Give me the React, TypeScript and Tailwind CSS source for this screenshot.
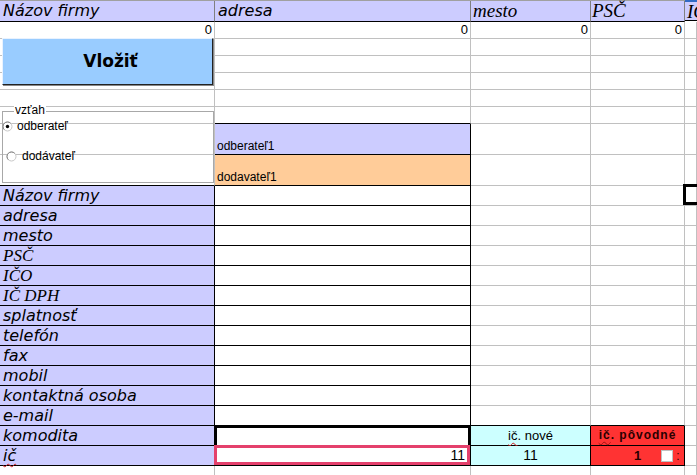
import clsx from 'clsx';
import type { ReactNode } from 'react';

const SANS = "font-['Liberation_Sans',Arial,sans-serif]";
const LABEL = "font-['DejaVu_Sans',Verdana,sans-serif] italic text-[16px]";
const SERIF = "font-['Liberation_Serif','Times_New_Roman',serif] italic text-[19px]";
const SERIF_SM = "font-['Liberation_Serif','Times_New_Roman',serif] italic text-[17px]";

const W = {
  a: 'w-[215px] shrink-0',
  b: 'w-[256px] shrink-0',
  c: 'w-[120px] shrink-0',
  d: 'w-[94px] shrink-0',
  e: 'flex-1 min-w-0',
};

type Col = keyof typeof W;
type Line = 'g' | 'k';

function Cell({
  col,
  r = 'g',
  b = 'g',
  className,
  children,
}: {
  col: Col;
  r?: Line;
  b?: Line;
  className?: string;
  children?: ReactNode;
}) {
  return (
    <div
      className={clsx(
        'relative h-full border-r border-b overflow-visible',
        W[col],
        r === 'g' ? 'border-r-[#c0c0c0]' : 'border-r-black',
        b === 'g' ? 'border-b-[#c0c0c0]' : 'border-b-black',
        className
      )}
    >
      {children}
    </div>
  );
}

function Radio({ on }: { on?: boolean }) {
  return (
    <svg width="11" height="11" viewBox="0 0 11 11" className="shrink-0">
      <circle cx="5.5" cy="5.5" r="4.5" fill="white" stroke="#c8c8c8" />
      <path d="M2.3 8.7 A4.5 4.5 0 0 1 8.7 2.3" fill="none" stroke="#808080" />
      {on && <circle cx="5.5" cy="5.5" r="1.7" fill="black" />}
    </svg>
  );
}

const labels = [
  'Názov firmy',
  'adresa',
  'mesto',
  'PSČ',
  'IČO',
  'IČ DPH',
  'splatnosť',
  'telefón',
  'fax',
  'mobil',
  'kontaktná osoba',
  'e-mail',
  'komodita',
  'ič',
];
const serifLabels = ['PSČ', 'IČO', 'IČ DPH'];

function Zero() {
  return <div className={clsx(SANS, 'text-[13px] text-right pr-[2px] leading-[16px]')}>0</div>;
}

function EmptyRow({ bBlack }: { bBlack?: boolean }) {
  return (
    <div className="flex h-[17px]">
      <Cell col="a" />
      <Cell col="b" b={bBlack ? 'k' : 'g'} />
      <Cell col="c" />
      <Cell col="d" />
      <Cell col="e" />
    </div>
  );
}

export default function App() {
  return (
    <div className="relative w-[697px] h-[475px] overflow-hidden bg-white text-black">
      {/* header */}
      <div className="flex h-[22px] border-t border-t-[#a0a0a0]">
        <div className={clsx(W.a, 'h-full bg-[#ccccff] border-r border-r-[#808080] border-b border-b-black pl-[3px]', LABEL, 'leading-[20px]')}>
          Názov firmy
        </div>
        <div className={clsx(W.b, 'h-full bg-[#ccccff] border-r border-r-[#808080] border-b border-b-black pl-[3px]', LABEL, 'leading-[20px]')}>
          adresa
        </div>
        <div className={clsx(W.c, 'h-full bg-[#ccccff] border-r border-r-[#808080] border-b border-b-black pl-[2px]', SERIF, 'leading-[20px]')}>
          mesto
        </div>
        <div className={clsx(W.d, 'h-full bg-[#ccccff] border-r border-r-[#808080] border-b border-b-black pl-[1px]', SERIF, 'leading-[20px]')}>
          PSČ
        </div>
        <div className={clsx(W.e, 'h-full bg-[#ccccff] border-b border-b-black border-t-2 border-t-[#316ac5] -mt-px pl-[2px] overflow-hidden whitespace-nowrap', SERIF, 'leading-[19px]')}>
          IČ
        </div>
      </div>

      {/* row with zeros */}
      <div className="flex h-[17px]">
        <Cell col="a"><Zero /></Cell>
        <Cell col="b"><Zero /></Cell>
        <Cell col="c"><Zero /></Cell>
        <Cell col="d"><Zero /></Cell>
        <Cell col="e" />
      </div>

      <EmptyRow />
      <EmptyRow />
      <EmptyRow />
      <EmptyRow />
      <EmptyRow bBlack />

      {/* odberateľ / dodávateľ */}
      <div className="flex h-[31px]">
        <Cell col="a" />
        <Cell col="b" r="k" b="k" className={clsx('bg-[#ccccff] flex items-end pl-[2px]', SANS, 'text-[12px] leading-[15px]')}>
          odberateľ1
        </Cell>
        <Cell col="c" />
        <Cell col="d" />
        <Cell col="e" />
      </div>
      <div className="flex h-[31px]">
        <Cell col="a" b="k" />
        <Cell col="b" r="k" b="k" className={clsx('bg-[#ffcc99] flex items-end pl-[2px]', SANS, 'text-[12px] leading-[15px]')}>
          dodavateľ1
        </Cell>
        <Cell col="c" />
        <Cell col="d" />
        <Cell col="e" />
      </div>

      {/* form labels */}
      {labels.map((l, i) => {
        const komodita = l === 'komodita';
        const ic = l === 'ič';
        const beforeKom = l === 'e-mail';
        return (
          <div key={l} className="flex h-[20px]">
            <Cell
              col="a"
              r="k"
              b="k"
              className={clsx(
                'bg-[#ccccff] flex items-end pl-[3px] whitespace-nowrap',
                serifLabels.includes(l) ? clsx(SERIF_SM, 'leading-[19px]') : clsx(LABEL, 'leading-[19px]')
              )}
            >
              {ic ? <span className="underline decoration-wavy decoration-[#d02020] decoration-1 underline-offset-2">ič</span> : l}
            </Cell>
            <Cell col="b" r="k" b="k" className={clsx(SANS, 'text-[14px] text-right leading-[19px]')}>
              {komodita && (
                <div className="absolute -left-px -top-px right-[-1px] bottom-0 border-[3px] border-b-0 border-black" />
              )}
              {ic && (
                <>
                  <div className="absolute -left-px -top-px right-0 bottom-0 border-[3px] border-[#e4406c]" />
                  <span className="relative pr-[5px]">11</span>
                </>
              )}
            </Cell>
            <Cell
              col="c"
              b={beforeKom || komodita || ic ? 'k' : 'g'}
              r={komodita || ic ? 'k' : 'g'}
              className={clsx(
                (komodita || ic) && 'bg-[#ccffff] text-center',
                SANS,
                komodita ? 'text-[13px] leading-[19px]' : 'text-[14px] leading-[19px]'
              )}
            >
              {komodita && (
                <>
                  <span className="underline decoration-wavy decoration-[#d02020] decoration-1 underline-offset-2">ič</span>. nové
                </>
              )}
              {ic && '11'}
            </Cell>
            <Cell
              col="d"
              b={beforeKom || komodita || ic ? 'k' : 'g'}
              r={komodita || ic ? 'k' : 'g'}
              className={clsx((komodita || ic) && 'bg-[#ff3333]', SANS, 'font-bold text-[#2a0000]')}
            >
              {komodita && (
                <div className="text-center text-[12px] leading-[19px] tracking-[1px]">
                  <span className="underline decoration-wavy decoration-[#a01010] decoration-1 underline-offset-2">ič</span>. pôvodné
                </div>
              )}
              {ic && (
                <div className="flex items-center h-full text-[13px]">
                  <span className="ml-[43px]">1</span>
                  <span className="ml-[20px] w-[12px] h-[12px] bg-white border border-[#c0c0c0]" />
                  <span className="ml-[3px] font-normal text-[12px]">:</span>
                </div>
              )}
            </Cell>
            <Cell col="e">
              {i === 0 && (
                <div className="absolute -left-[2px] -top-[2px] w-[20px] h-[21px] border-[3px] border-black" />
              )}
            </Cell>
          </div>
        );
      })}

      <div className="flex h-[20px]">
        <Cell col="a" />
        <Cell col="b" />
        <Cell col="c" />
        <Cell col="d" />
        <Cell col="e" />
      </div>

      {/* floating button */}
      <button
        className={clsx(
          'absolute left-[2px] top-[38px] w-[211px] h-[47px] bg-[#99ccff] border border-t-[#e8f2ff] border-l-[#e8f2ff] border-r-[#222] border-b-[#222] shadow-[1px_1px_0_#888]',
          "font-['DejaVu_Sans',Tahoma,sans-serif] font-bold text-[17px] pl-[6px]"
        )}
      >
        Vložiť
      </button>

      {/* group box */}
      <div className="absolute left-[2px] top-[111px] w-[212px] h-[72px] border border-[#a8a8a8]">
        <div className={clsx('absolute left-[11px] -top-[8px] bg-white px-[1px] text-[12px] leading-[13px]', SANS)}>vzťah</div>
        <div className={clsx('flex flex-col pt-[8px] text-[12px] leading-[13px]', SANS)}>
          <div className="flex items-center gap-[4px] -ml-[1px]">
            <Radio on />
            <span>odberateľ</span>
          </div>
          <div className="flex items-center gap-[5px] ml-[3px] mt-[17px]">
            <Radio />
            <span>dodávateľ</span>
          </div>
        </div>
      </div>
    </div>
  );
}
